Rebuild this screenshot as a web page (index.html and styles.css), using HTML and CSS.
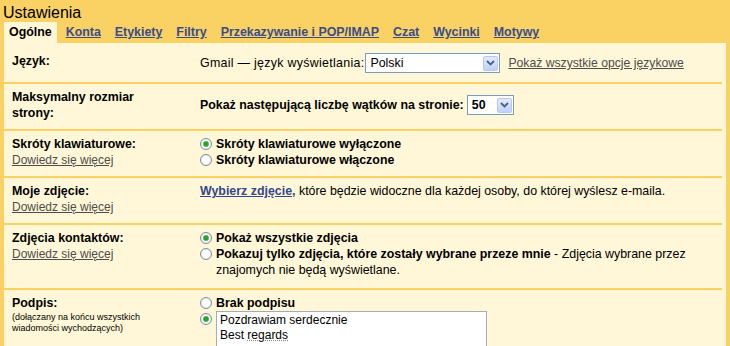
FILE: index.html
```html
<!DOCTYPE html>
<html lang="pl">
  <head>
    <meta charset="UTF-8" />
    <meta name="viewport" content="width=device-width, initial-scale=1.0" />
    <title>Ustawienia</title>
    <link rel="stylesheet" href="styles.css">
  </head>
  <body>
    <h1 class="title">Ustawienia</h1>
    <div class="tabs">
      <span class="tab active">Ogólne</span>
      <a href="#konta" class="tab">Konta</a>
      <a href="#etykiety" class="tab">Etykiety</a>
      <a href="#filtry" class="tab">Filtry</a>
      <a href="#pop" class="tab">Przekazywanie i POP/IMAP</a>
      <a href="#czat" class="tab">Czat</a>
      <a href="#wycinki" class="tab">Wycinki</a>
      <a href="#motywy" class="tab">Motywy</a>
    </div>

    <div class="panel">
      <div class="row first">
        <div class="label">Język:</div>
        <div class="value nowrap">
          <span class="lang-label">Gmail — język wyświetlania:</span>
          <span class="select lang">
            <span class="select-text">Polski</span>
            <span class="arrow">
              <svg width="9" height="6" viewBox="0 0 9 6"><path d="M1 1 L4.5 4.5 L8 1" fill="none" stroke="#4d6185" stroke-width="1.8"/></svg>
            </span>
          </span>
          <a href="#jezyki" class="gray-link">Pokaż wszystkie opcje językowe</a>
        </div>
      </div>

      <div class="row">
        <div class="label">Maksymalny rozmiar<br>strony:</div>
        <div class="value nowrap">
          <b>Pokaż następującą liczbę wątków na stronie:</b>
          <span class="select small">
            <span class="select-text"><b>50</b></span>
            <span class="arrow">
              <svg width="9" height="6" viewBox="0 0 9 6"><path d="M1 1 L4.5 4.5 L8 1" fill="none" stroke="#4d6185" stroke-width="1.8"/></svg>
            </span>
          </span>
        </div>
      </div>

      <div class="row">
        <div class="label">
          Skróty klawiaturowe:<br>
          <a href="#skroty" class="gray-link">Dowiedz się więcej</a>
        </div>
        <div class="value">
          <div class="option"><span class="radio checked"></span><b>Skróty klawiaturowe wyłączone</b></div>
          <div class="option"><span class="radio"></span><b>Skróty klawiaturowe włączone</b></div>
        </div>
      </div>

      <div class="row">
        <div class="label">
          Moje zdjęcie:<br>
          <a href="#zdjecie" class="gray-link">Dowiedz się więcej</a>
        </div>
        <div class="value">
          <a href="#wybierz" class="blue-link">Wybierz zdjęcie,</a> które będzie widoczne dla każdej osoby, do której wyślesz e-maila.
        </div>
      </div>

      <div class="row tall">
        <div class="label">
          Zdjęcia kontaktów:<br>
          <a href="#kontakty" class="gray-link">Dowiedz się więcej</a>
        </div>
        <div class="value">
          <div class="option"><span class="radio checked"></span><b>Pokaż wszystkie zdjęcia</b></div>
          <div class="option">
            <span class="radio"></span>
            <span class="option-text"><b>Pokazuj tylko zdjęcia, które zostały wybrane przeze mnie</b> - Zdjęcia wybrane przez znajomych nie będą wyświetlane.</span>
          </div>
        </div>
      </div>

      <div class="row last">
        <div class="label">
          Podpis:<br>
          <span class="hint">(dołączany na końcu wszystkich<br>wiadomości wychodzących)</span>
        </div>
        <div class="value">
          <div class="option"><span class="radio"></span><b>Brak podpisu</b></div>
          <div class="option">
            <span class="radio checked"></span>
            <div class="signature">Pozdrawiam serdecznie<br>Best <span class="spell">regards</span></div>
          </div>
        </div>
      </div>
    </div>
  </body>
</html>
```

FILE: styles.css
```css
body {
  margin: 0;
  padding: 0;
  background-color: #fad163;
  font-family: "Liberation Sans", Arial, sans-serif;
  font-size: 12.4px;
  color: #000;
}
.title {
  margin: 0;
  padding: 4px 0 0 3px;
  font-size: 16px;
  font-weight: normal;
  line-height: 18px;
}
.tabs {
  display: flex;
  gap: 4px;
  padding-left: 4px;
  height: 21px;
}
.tab {
  padding: 0 5px;
  line-height: 21px;
  font-weight: bold;
  color: #394c8c;
}
.tab.active {
  background-color: #fff7d7;
  color: #000;
  padding: 0 5px;
}
.panel {
  background-color: #fff7d7;
  margin: 0 4px;
  height: 303px;
  overflow: hidden;
}
.row {
  display: grid;
  grid-template-columns: 188px 500px;
  padding: 5px 0 8px 8px;
  margin-right: 4px;
  border-bottom: 2px solid #fad163;
  line-height: 16px;
}
.row.first {
  padding-top: 10px;
  padding-bottom: 9px;
}
.row.tall {
  padding-bottom: 10px;
}
.row.last {
  border-bottom: none;
}
.label {
  font-weight: bold;
}
.label .gray-link {
  font-weight: normal;
}
.nowrap {
  white-space: nowrap;
  display: flex;
  align-items: center;
}
.lang-label {
  letter-spacing: 0.3px;
}
.gray-link {
  font-size: 12px;
  color: #4d4d4d;
  text-decoration: underline;
}
.nowrap .gray-link {
  margin-left: 6px;
  font-size: 12.2px;
}
.blue-link {
  color: #34478c;
  font-weight: bold;
}
.select {
  display: inline-flex;
  align-items: center;
  justify-content: space-between;
  height: 18px;
  border: 1px solid #7f9db9;
  background-color: #fff;
  margin: 0 2px 0 1px;
  padding: 0 1px 0 4px;
}
.select.lang {
  width: 128px;
}
.select.small {
  width: 40px;
  margin-left: 3px;
}
.arrow {
  display: flex;
  align-items: center;
  justify-content: center;
  width: 15px;
  height: 15px;
  border: 1px solid #b6c8f0;
  border-radius: 2px;
  background: linear-gradient(#e3ecfe, #bfd1f8);
  box-sizing: border-box;
}
.option {
  display: flex;
  align-items: flex-start;
  gap: 4px;
}
.option-text {
  flex: 1;
}
.radio {
  flex: none;
  width: 12px;
  height: 12px;
  margin-top: 2px;
  border: 1px solid #7d8da3;
  border-radius: 50%;
  box-sizing: border-box;
  background: radial-gradient(circle, #fff 0 3px, #e6e6e6 6px);
}
.radio.checked {
  background: radial-gradient(circle, #28a428 0 2px, #8fd68f 3px, #fff 3.5px, #e6e6e6 6px);
}
.hint {
  display: inline-block;
  font-size: 9px;
  line-height: 11px;
  font-weight: normal;
  margin-top: 1px;
}
.signature {
  width: 263px;
  height: 60px;
  border: 1px solid #a5acb2;
  background-color: #fff;
  padding: 1px 3px;
  font-size: 12px;
  line-height: 15px;
}
.spell {
  text-decoration: underline dotted #888;
}
```
